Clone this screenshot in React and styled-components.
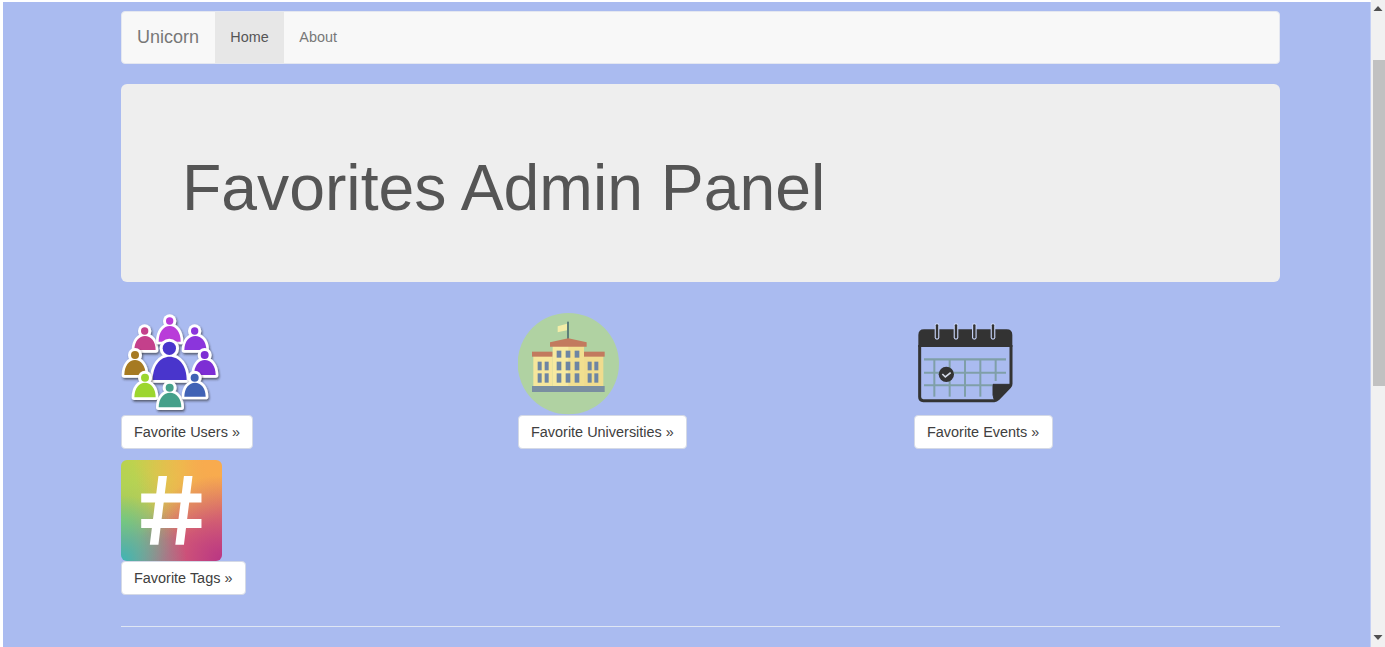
import React from "react";
import styled, { createGlobalStyle } from "styled-components";

const Global = createGlobalStyle`
  html, body { margin: 0; padding: 0; background: #fff; overflow: hidden; }
  * { box-sizing: border-box; }
`;

const Frame = styled.div`
  width: 1385px;
  height: 647px;
  display: flex;
  overflow: hidden;
  padding: 2px 0 0 3px;
  background: #fff;
  font-family: "Liberation Sans", Arial, sans-serif;
`;
const Page = styled.main`
  flex: 1;
  min-width: 0;
  background: #aabbf0;
  padding: 9px 90px 0 118px;
  border-right: 1px solid #c4d0f4;
`;
const Navbar = styled.nav`
  height: 53px;
  display: flex;
  align-items: stretch;
  background: #f8f8f8;
  border: 1px solid #e4e7f0;
  border-radius: 4px;
`;
const Brand = styled.a`
  padding: 0 15.5px 0 15px;
  font-size: 18px;
  line-height: 50px;
  color: #777;
`;
const NavLink = styled.a`
  padding: 0 14.8px 0 15.8px;
  font-size: 14.4px;
  line-height: 51px;
  color: ${p => (p.$active ? "#555" : "#777")};
  background: ${p => (p.$active ? "#e7e7e7" : "transparent")};
`;
const Jumbotron = styled.section`
  height: 198px;
  margin-top: 20px;
  padding: 69px 61px 0;
  background: #eee;
  border-radius: 6px;
`;
const Title = styled.h1`
  margin: 0;
  font-size: 64.3px;
  font-weight: 400;
  line-height: 70px;
  color: #555;
`;
const Grid = styled.div`
  display: grid;
  grid-template-columns: 397px 396px 1fr;
  row-gap: 11px;
  margin-top: 31px;
`;
const Card = styled.div`
  display: flex;
  flex-direction: column;
  align-items: flex-start;
`;
const IconSvg = styled.svg`
  display: block;
  width: 101px;
  height: ${p => p.$h || 102}px;
  filter: blur(0.35px);
`;
const TagBox = styled.div`
  width: 101px;
  height: 101px;
  border-radius: 6px;
  overflow: hidden;
  background:
    radial-gradient(circle at 0% 100%, #3cb6b5 0%, rgba(60,182,181,0) 46%),
    radial-gradient(circle at 100% 100%, #b93684 0%, rgba(185,54,132,0) 60%),
    radial-gradient(circle at 100% 0%, #f8ab4e 0%, #f8ab4e 12%, rgba(248,171,78,0) 62%),
    radial-gradient(circle at 0% 60%, #97d35f 0%, rgba(151,211,95,0) 50%),
    radial-gradient(circle at 0% 0%, #b8d24f 0%, #c4d24e 18%, rgba(196,210,78,0) 55%),
    radial-gradient(circle at 42% 0%, #e8cf4c 0%, #e8cf4c 18%, rgba(232,207,76,0) 68%),
    #e6746a;
`;
const Button = styled.a`
  display: inline-block;
  height: 34px;
  padding: 0 12.5px 0 12px;
  font-size: 14.45px;
  line-height: 32px;
  color: #404040;
  background: #fff;
  border: 1px solid #d4d9e6;
  border-radius: 4px;
`;
const Rule = styled.hr`
  margin: 31px 0 0;
  border: 0;
  border-top: 1px solid #dfe6f4;
`;
const Scrollbar = styled.aside`
  width: 14px;
  flex: none;
  margin-top: -2px;
  display: flex;
  flex-direction: column;
  align-items: flex-end;
  background: #f1f1f1;
`;
const Arrow = styled.svg`
  width: 14px;
  height: 17px;
  flex: none;
  display: block;
  fill: #505050;
`;
const Thumb = styled.div`
  width: 12px;
  height: 326px;
  margin-top: 43px;
  background: #c1c1c1;
`;
const Filler = styled.div`
  flex: 1;
`;

const people = [
  [104, 93, 11, 73, 137, 108, 150, "#c43f8b"],
  [179, 63, 11, 146, 212, 78, 125, "#b93ad9"],
  [254, 93, 11, 223, 289, 108, 150, "#8b35dc"],
  [75, 165, 12, 43, 107, 180, 225, "#a67a22"],
  [284, 165, 12, 252, 317, 180, 225, "#7d2fd4"],
  [178, 145, 20, 128, 230, 170, 240, "#4a35cc"],
  [105, 233, 12, 73, 137, 248, 292, "#9cd62f"],
  [179, 263, 12, 146, 214, 278, 322, "#45a08a"],
  [254, 233, 12, 223, 287, 248, 290, "#3f62b5"],
];

const Person = ({ p }) => {
  const [cx, cy, r, l, rr, t, b, c] = p;
  const m = (l + rr) / 2;
  const w = (rr - l) / 2;
  const body = `M${l} ${b}C${l} ${b - (b - t) * 0.62} ${m - w * 0.55} ${t} ${m} ${t}C${m + w * 0.55} ${t} ${rr} ${b - (b - t) * 0.62} ${rr} ${b}Z`;
  return (
    <g filter="url(#sh)">
      <circle cx={cx} cy={cy} r={r + 9} fill="#fff" />
      <path d={body} fill={c} stroke="#fff" strokeWidth="16" strokeLinejoin="round" />
      <path d={body} fill={c} />
      <circle cx={cx} cy={cy} r={r} fill={c} />
    </g>
  );
};

const UsersIcon = () => (
  <IconSvg viewBox="33 39 303 306">
    <defs>
      <filter id="sh" x="-20%" y="-20%" width="150%" height="150%">
        <feDropShadow dx="3" dy="5" stdDeviation="3" floodColor="#222" floodOpacity=".65" />
      </filter>
    </defs>
    {people.map((p, i) => <Person key={i} p={p} />)}
  </IconSvg>
);

const UniversityIcon = () => {
  const cols = [
    [[83, 95], [104, 116], [233, 245], [253, 265]],
    [[140, 154], [167, 181], [194, 208]],
  ];
  return (
    <IconSvg viewBox="24 24 303 306">
      <circle cx="175" cy="176" r="152" fill="#b0d2a2" />
      <rect x="171" y="50" width="6" height="52" fill="#5e7f78" />
      <path d="M143 64 171 56V76L143 82Z" fill="#f3eda8" />
      <rect x="70" y="150" width="58" height="94" fill="#f6e69c" />
      <rect x="222" y="150" width="58" height="94" fill="#f0dc8e" />
      <rect x="66" y="140" width="62" height="15" fill="#c27a5e" />
      <rect x="222" y="140" width="62" height="15" fill="#c27a5e" />
      <rect x="128" y="122" width="94" height="122" fill="#f7e9a0" />
      <rect x="175" y="122" width="47" height="122" fill="#f1df90" />
      <path d="M120 112 175 100 230 112V125H120Z" fill="#c27a5e" />
      {cols[0].map(([a, b]) => (
        <g key={a} fill="#6d85a3">
          <rect x={a} y="170" width={b - a} height="26" />
          <rect x={a} y="205" width={b - a} height="28" />
        </g>
      ))}
      {cols[1].map(([a, b]) => (
        <g key={a} fill="#6d85a3">
          <rect x={a} y="137" width={b - a} height="21" />
          <rect x={a} y="170" width={b - a} height="26" />
          <rect x={a} y="205" width={b - a} height="28" />
        </g>
      ))}
      <rect x="66" y="243" width="218" height="18" fill="#7a8ea0" />
    </IconSvg>
  );
};

const CalendarIcon = () => (
  <IconSvg viewBox="27 24 303 306">
    <path d="M44 120V276Q44 287 55 287H268Q274 287 280 281L314 246Q318 242 318 236V120" fill="none" stroke="#333" strokeWidth="9" />
    <path d="M40 126V90Q40 73 57 73H305Q322 73 322 90V126Z" fill="#333" />
    {[96, 153, 208, 264].map(x => (
      <g key={x}>
        <line x1={x} y1="61" x2={x} y2="97" stroke="#c4d0f4" strokeWidth="14" strokeLinecap="round" />
        <line x1={x} y1="61" x2={x} y2="97" stroke="#333" strokeWidth="7" strokeLinecap="round" />
      </g>
    ))}
    <g stroke="#7f9fa8" fill="none">
      <line x1="57" y1="163" x2="303" y2="163" strokeWidth="7" />
      <line x1="57" y1="203" x2="303" y2="203" strokeWidth="6" />
      <line x1="57" y1="241" x2="262" y2="241" strokeWidth="6" />
      {[88, 134, 180, 226, 272].map(x => (
        <line key={x} x1={x} y1="163" x2={x} y2={x === 272 ? 228 : 275} strokeWidth="6" />
      ))}
    </g>
    <path d="M264 238H318L272 286Q266 286 264 270Z" fill="#333" stroke="#333" strokeWidth="3" strokeLinejoin="round" />
    <circle cx="124" cy="208" r="23" fill="#333" />
    <path d="M112 207 121 216 137 203" fill="none" stroke="#d6dce8" strokeWidth="5" />
  </IconSvg>
);

const TagsIcon = () => (
  <TagBox>
    <IconSvg $h={101} viewBox="33 27 303 305">
      <g fill="#fff">
        <path d="M93 128H275V155H93Z" />
        <path d="M93 205H275V232H93Z" />
        <path d="M145 75H171L145 283H119Z" />
        <path d="M222 75H248L222 283H196Z" />
      </g>
    </IconSvg>
  </TagBox>
);

const ScrollArrow = ({ up }) => (
  <Arrow viewBox="0 0 14 17">
    {up ? <path d="M7 6 11.5 11H2.5Z" /> : <path d="M2.5 5H11.5L7 10Z" />}
  </Arrow>
);

const items = [
  ["Favorite Users »", <UsersIcon key="u" />],
  ["Favorite Universities »", <UniversityIcon key="v" />],
  ["Favorite Events »", <CalendarIcon key="e" />],
  ["Favorite Tags »", <TagsIcon key="t" />],
];

export default function App() {
  return (
    <>
      <Global />
      <Frame>
        <Page>
          <Navbar>
            <Brand>Unicorn</Brand>
            <NavLink $active>Home</NavLink>
            <NavLink>About</NavLink>
          </Navbar>
          <Jumbotron>
            <Title>Favorites Admin Panel</Title>
          </Jumbotron>
          <Grid>
            {items.map(([label, icon]) => (
              <Card key={label}>
                {icon}
                <Button>{label}</Button>
              </Card>
            ))}
          </Grid>
          <Rule />
        </Page>
        <Scrollbar>
          <ScrollArrow up />
          <Thumb />
          <Filler />
          <ScrollArrow />
        </Scrollbar>
      </Frame>
    </>
  );
}
